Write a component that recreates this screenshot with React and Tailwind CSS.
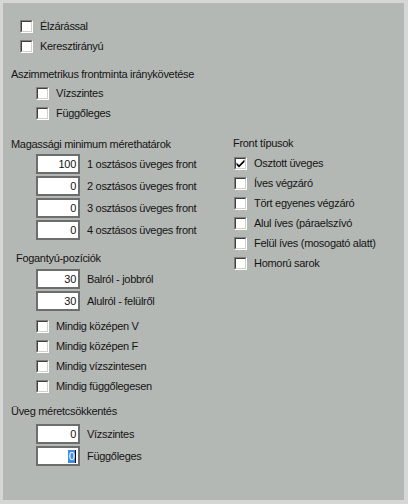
import React from "react";

const font = { fontFamily: '"Liberation Sans", Arial, sans-serif' };

const Check = ({ checked }) => (
  <div className="w-[13px] h-[13px] shrink-0 border-t border-l border-t-[#808080] border-l-[#808080] border-b border-r border-b-white border-r-white">
    <div className="w-full h-full bg-white border-t border-l border-t-[#404040] border-l-[#404040] border-b border-r border-b-[#d4d0c8] border-r-[#d4d0c8] flex items-center justify-center">
      {checked && (
        <svg width="9" height="9" viewBox="0 0 9 9">
          <path d="M0.5 3.5 L3 6 L8.5 0.5 L8.5 3 L3 8.5 L0.5 6 Z" fill="#000" />
        </svg>
      )}
    </div>
  </div>
);

const CheckRow = ({ label, checked, ml }) => (
  <div className={`flex items-center h-[20px] gap-[7px] ${ml}`}>
    <Check checked={checked} />
    <span>{label}</span>
  </div>
);

const Field = ({ value, label, selected }) => (
  <div className="flex items-center h-[20px] ml-[33px]">
    <div className="w-[44px] h-[20px] bg-white border-2 border-[#6d6d6d] flex items-center justify-end pr-[2px]">
      {selected ? (
        <span className="flex items-center">
          <span className="bg-[#3a8ee6] text-white leading-[13px] px-[0.5px]">{value}</span>
          <span className="w-px h-[13px] bg-black" />
        </span>
      ) : (
        <span>{value}</span>
      )}
    </div>
    <span className="ml-[7px]">{label}</span>
  </div>
);

const Heading = ({ children, ml = "ml-[8px]", mt }) => (
  <div className={`h-[16px] flex items-center ${ml} ${mt}`}>{children}</div>
);

export default function App() {
  return (
    <div className="w-[408px] h-[504px] bg-[#d6d6d6] pt-[3px] pl-[3px] pr-[4px] pb-[4px]">
      <div
        className="w-full h-full bg-[#b4b8b4] text-[11px] tracking-[-0.3px] text-[#141414] pt-[13px]"
        style={font}
      >
        <CheckRow label="Élzárással" ml="ml-[17px]" />
        <CheckRow label="Keresztirányú" ml="ml-[17px]" />
        <Heading mt="mt-[10px]">Aszimmetrikus frontminta iránykövetése</Heading>
        <div className="mt-[1px]">
          <CheckRow label="Vízszintes" ml="ml-[33px]" />
          <CheckRow label="Függőleges" ml="ml-[33px]" />
        </div>

        <div className="flex">
          {/* bal oszlop */}
          <div className="w-[222px] flex flex-col">
            <Heading mt="mt-[13px]">Magassági minimum mérethatárok</Heading>
            <div className="flex flex-col gap-[2px] mt-[2px]">
              <Field value="100" label="1 osztásos üveges front" />
              <Field value="0" label="2 osztásos üveges front" />
              <Field value="0" label="3 osztásos üveges front" />
              <Field value="0" label="4 osztásos üveges front" />
            </div>

            <Heading ml="ml-[13px]" mt="mt-[10px]">Fogantyú-pozíciók</Heading>
            <div className="flex flex-col gap-[2px] mt-[3px]">
              <Field value="30" label="Balról - jobbról" />
              <Field value="30" label="Alulról - felülről" />
            </div>
            <div className="flex flex-col mt-[5px]">
              <CheckRow label="Mindig középen V" ml="ml-[33px]" />
              <CheckRow label="Mindig középen F" ml="ml-[33px]" />
              <CheckRow label="Mindig vízszintesen" ml="ml-[33px]" />
              <CheckRow label="Mindig függőlegesen" ml="ml-[33px]" />
            </div>

            <Heading mt="mt-[7px]">Üveg méretcsökkentés</Heading>
            <div className="flex flex-col gap-[2px] mt-[5px]">
              <Field value="0" label="Vízszintes" />
              <Field value="0" label="Függőleges" selected />
            </div>
          </div>

          {/* jobb oszlop */}
          <div className="flex flex-col ml-[8px]">
            <Heading ml="ml-0" mt="mt-[12px]">Front típusok</Heading>
            <div className="flex flex-col mt-[2px] ml-[1px]">
              <CheckRow label="Osztott üveges" checked ml="ml-0" />
              <CheckRow label="Íves végzáró" ml="ml-0" />
              <CheckRow label="Tört egyenes végzáró" ml="ml-0" />
              <CheckRow label="Alul íves (páraelszívó" ml="ml-0" />
              <CheckRow label="Felül íves (mosogató alatt)" ml="ml-0" />
              <CheckRow label="Homorú sarok" ml="ml-0" />
            </div>
          </div>
        </div>
      </div>
    </div>
  );
}
